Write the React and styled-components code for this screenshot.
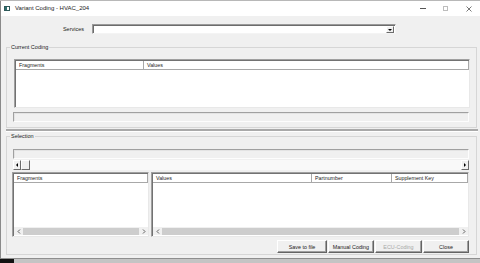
import React from 'react';
import styled, { createGlobalStyle } from 'styled-components';

const Global = createGlobalStyle`
  html, body { margin: 0; padding: 0; background: #f0f0f0; }
  body { font-family: "Liberation Sans", Arial, sans-serif; }
  * { box-sizing: border-box; }
`;

const Screen = styled.div`
  width: 480px;
  height: 263px;
  display: flex;
  flex-direction: column;
  overflow: hidden;
  background: #f0f0f0;
`;

const TopStrip = styled.div`
  height: 1px;
  flex: none;
  background: #b8b8b8;
`;

const Window = styled.div`
  flex: none;
  height: 258px;
  display: flex;
  flex-direction: column;
  border-left: 1px solid #8a8a8a;
  border-bottom: 1px solid #8e8e8e;
  background: #f0f0f0;
`;

const BottomStrip = styled.div`
  flex: 1;
  display: flex;
  background: #c4c4c4;
`;

const TaskBlock = styled.div`
  width: 14px;
  background: #111;
`;

const TitleBar = styled.div`
  height: 15px;
  flex: none;
  background: #fff;
  display: flex;
  align-items: center;
  padding-left: 3px;
`;

const AppIcon = styled.svg`
  flex: none;
  margin-right: 5px;
`;

const Title = styled.span`
  flex: 1;
  font-size: 6px;
  line-height: 7px;
  color: #1a1a1a;
  white-space: nowrap;
`;

const Controls = styled.div`
  display: flex;
  height: 100%;
`;

const CtrlBtn = styled.div`
  width: 23px;
  height: 100%;
  display: flex;
  align-items: center;
  justify-content: center;
`;

const Body = styled.div`
  flex: 1;
  min-height: 0;
  display: flex;
  flex-direction: column;
  padding: 8px 3px 0 5px;
`;

const Row = styled.div`
  display: flex;
  align-items: center;
  height: 10px;
  flex: none;
`;

const Label = styled.span`
  width: 78px;
  margin-right: 8px;
  text-align: right;
  font-size: 5.5px;
  color: #222;
`;

const Combo = styled.div`
  width: 304px;
  height: 10px;
  background: #fff;
  border: 1px solid;
  border-color: #9a9a9a #f4f4f4 #f4f4f4 #9a9a9a;
  box-shadow: inset 1px 1px 0 #6c6c6c;
  display: flex;
  justify-content: flex-end;
  align-items: stretch;
  padding: 1px 1px 0 0;
`;

const RaisedBtn = styled.div`
  width: ${p => p.$w || 8}px;
  flex: none;
  background: #f0f0f0;
  border: 1px solid;
  border-color: #fff #6c6c6c #6c6c6c #fff;
  display: flex;
  align-items: center;
  justify-content: center;
`;

const Group = styled.fieldset`
  margin: ${p => p.$mt || 0}px 0 0 0;
  width: 471px;
  min-width: 0;
  padding: 0 6px ${p => p.$pb || 0}px 6px;
  border: 1px solid #d6d6d6;
  display: flex;
  flex-direction: column;
  flex: none;
`;

const Legend = styled.legend`
  font-size: 5.5px;
  line-height: 7px;
  height: 7px;
  padding: 0 1px;
  margin-left: -3px;
  color: #222;
`;

const ListBox = styled.div`
  width: ${p => p.$w}px;
  height: ${p => p.$h}px;
  margin: ${p => p.$mt || 0}px 0 0 ${p => p.$ml || 0}px;
  background: #fff;
  border: 1px solid;
  border-color: #a0a0a0 #e8e8e8 #e8e8e8 #a0a0a0;
  box-shadow: inset 1px 1px 0 #727272;
  display: flex;
  flex-direction: column;
  flex: none;
  overflow: hidden;
`;

const Header = styled.div`
  height: 9px;
  flex: none;
  display: grid;
  grid-template-columns: ${p => p.$cols};
  margin: 1px 0 0 1px;
  border-bottom: 1px solid #a8a8a8;
  border-right: 1px solid #a8a8a8;
  background: #fff;
`;

const HeadCell = styled.div`
  font-size: 5.3px;
  line-height: 8px;
  padding-left: 3px;
  color: #222;
  white-space: nowrap;
  overflow: hidden;
  & + & { border-left: 1px solid #a8a8a8; }
`;

const ListArea = styled.div`
  flex: 1;
`;

const ListScroll = styled.div`
  height: 8px;
  flex: none;
  display: flex;
  align-items: center;
  background: #f0f0f0;
  margin: 0 0 1px 1px;
`;

const ArrowCell = styled.div`
  width: 9px;
  height: 100%;
  flex: none;
  display: flex;
  align-items: center;
  justify-content: center;
`;

const Thumb = styled.div`
  flex: 1;
  height: 7px;
  background: #cdcdcd;
`;

const TextField = styled.div`
  width: ${p => p.$w}px;
  height: 10px;
  margin-top: ${p => p.$mt || 0}px;
  flex: none;
  background: #f0f0f0;
  border: 1px solid;
  border-color: #a0a0a0 #fdfdfd #fdfdfd #a0a0a0;
  box-shadow: inset 1px 1px 0 #e3e3e3;
`;

const Splitter = styled.div`
  margin-top: 1px;
  height: 2px;
  width: 472px;
  flex: none;
  background: #a9a9a9;
  border-bottom: 1px solid #fff;
  height: 3px;
`;

const HScroll = styled.div`
  width: 456px;
  height: 10px;
  margin-top: 1px;
  flex: none;
  display: flex;
  background: #f9f9f9;
`;

const Track = styled.div`
  flex: 1;
`;

const ListsRow = styled.div`
  display: flex;
  gap: 2px;
  margin: 2px 0 0 -1px;
  flex: none;
`;

const ButtonRow = styled.div`
  display: flex;
  justify-content: flex-end;
  gap: 1px;
  margin: 3px 1px 0 0;
  height: 13px;
  flex: none;
`;

const Button = styled.div`
  width: ${p => p.$w}px;
  height: 13px;
  background: #f0f0f0;
  border: 1px solid;
  border-color: #fff #646464 #646464 #fff;
  box-shadow: inset -1px -1px 0 #a0a0a0;
  display: flex;
  align-items: center;
  justify-content: center;
  font-size: 5.4px;
  color: ${p => (p.$disabled ? '#a8a8a8' : '#222')};
  white-space: nowrap;
`;

const Chevron = ({ dir }) => (
  <svg width="4" height="5" viewBox="0 0 4 5">
    <polyline
      points={dir === 'left' ? '3,0.5 1,2.5 3,4.5' : '1,0.5 3,2.5 1,4.5'}
      fill="none"
      stroke="#606060"
      strokeWidth="1"
    />
  </svg>
);

const Tri = ({ dir }) => {
  const pts = {
    left: '3,0 3,4 1,2',
    right: '1,0 1,4 3,2',
    down: '0,1 4,1 2,3',
  }[dir];
  return (
    <svg width="4" height="4" viewBox="0 0 4 4">
      <polygon points={pts} fill="#000" />
    </svg>
  );
};

const ListScrollBar = () => (
  <ListScroll>
    <ArrowCell><Chevron dir="left" /></ArrowCell>
    <Thumb />
    <ArrowCell><Chevron dir="right" /></ArrowCell>
  </ListScroll>
);

export default function App() {
  return (
    <>
      <Global />
      <Screen>
        <TopStrip />
        <Window>
          <TitleBar>
            <AppIcon width="6" height="5" viewBox="0 0 6 5">
              <rect x="0.5" y="0.5" width="5" height="4" fill="#fff" stroke="#2f5a5a" />
              <rect x="1" y="1" width="2" height="3" fill="#2f6f6f" />
            </AppIcon>
            <Title>Variant Coding - HVAC_204</Title>
            <Controls>
              <CtrlBtn>
                <svg width="6" height="1" viewBox="0 0 6 1"><rect width="6" height="1" fill="#555" /></svg>
              </CtrlBtn>
              <CtrlBtn>
                <svg width="5" height="5" viewBox="0 0 5 5"><rect x="0.5" y="0.5" width="4" height="4" fill="none" stroke="#bdbdbd" /></svg>
              </CtrlBtn>
              <CtrlBtn>
                <svg width="6" height="6" viewBox="0 0 6 6"><path d="M0.5 0.5 L5.5 5.5 M5.5 0.5 L0.5 5.5" stroke="#555" strokeWidth="0.8" /></svg>
              </CtrlBtn>
            </Controls>
          </TitleBar>
          <Body>
            <Row>
              <Label>Services</Label>
              <Combo>
                <RaisedBtn $w={8}><Tri dir="down" /></RaisedBtn>
              </Combo>
            </Row>

            <Group $mt={10} $pb={5}>
              <Legend>Current Coding</Legend>
              <ListBox $w={456} $h={49} $mt={8} $ml={1}>
                <Header $cols="127px 1fr">
                  <HeadCell>Fragments</HeadCell>
                  <HeadCell>Values</HeadCell>
                </Header>
                <ListArea />
              </ListBox>
              <TextField $w={456} $mt={4} />
            </Group>

            <Splitter />

            <Group $mt={1} $pb={1}>
              <Legend>Selection</Legend>
              <TextField $w={456} $mt={9} />
              <HScroll>
                <RaisedBtn $w={8}><Tri dir="left" /></RaisedBtn>
                <RaisedBtn $w={9} />
                <Track />
                <RaisedBtn $w={8}><Tri dir="right" /></RaisedBtn>
              </HScroll>
              <ListsRow>
                <ListBox $w={137} $h={65}>
                  <Header $cols="1fr">
                    <HeadCell>Fragments</HeadCell>
                  </Header>
                  <ListArea />
                  <ListScrollBar />
                </ListBox>
                <ListBox $w={318} $h={65}>
                  <Header $cols="158px 80px 1fr">
                    <HeadCell>Values</HeadCell>
                    <HeadCell>Partnumber</HeadCell>
                    <HeadCell>Supplement Key</HeadCell>
                  </Header>
                  <ListArea />
                  <ListScrollBar />
                </ListBox>
              </ListsRow>
              <ButtonRow>
                <Button $w={50}>Save to file</Button>
                <Button $w={46}>Manual Coding</Button>
                <Button $w={47} $disabled>ECU-Coding</Button>
                <Button $w={46}>Close</Button>
              </ButtonRow>
            </Group>
          </Body>
        </Window>
        <BottomStrip>
          <TaskBlock />
        </BottomStrip>
      </Screen>
    </>
  );
}
